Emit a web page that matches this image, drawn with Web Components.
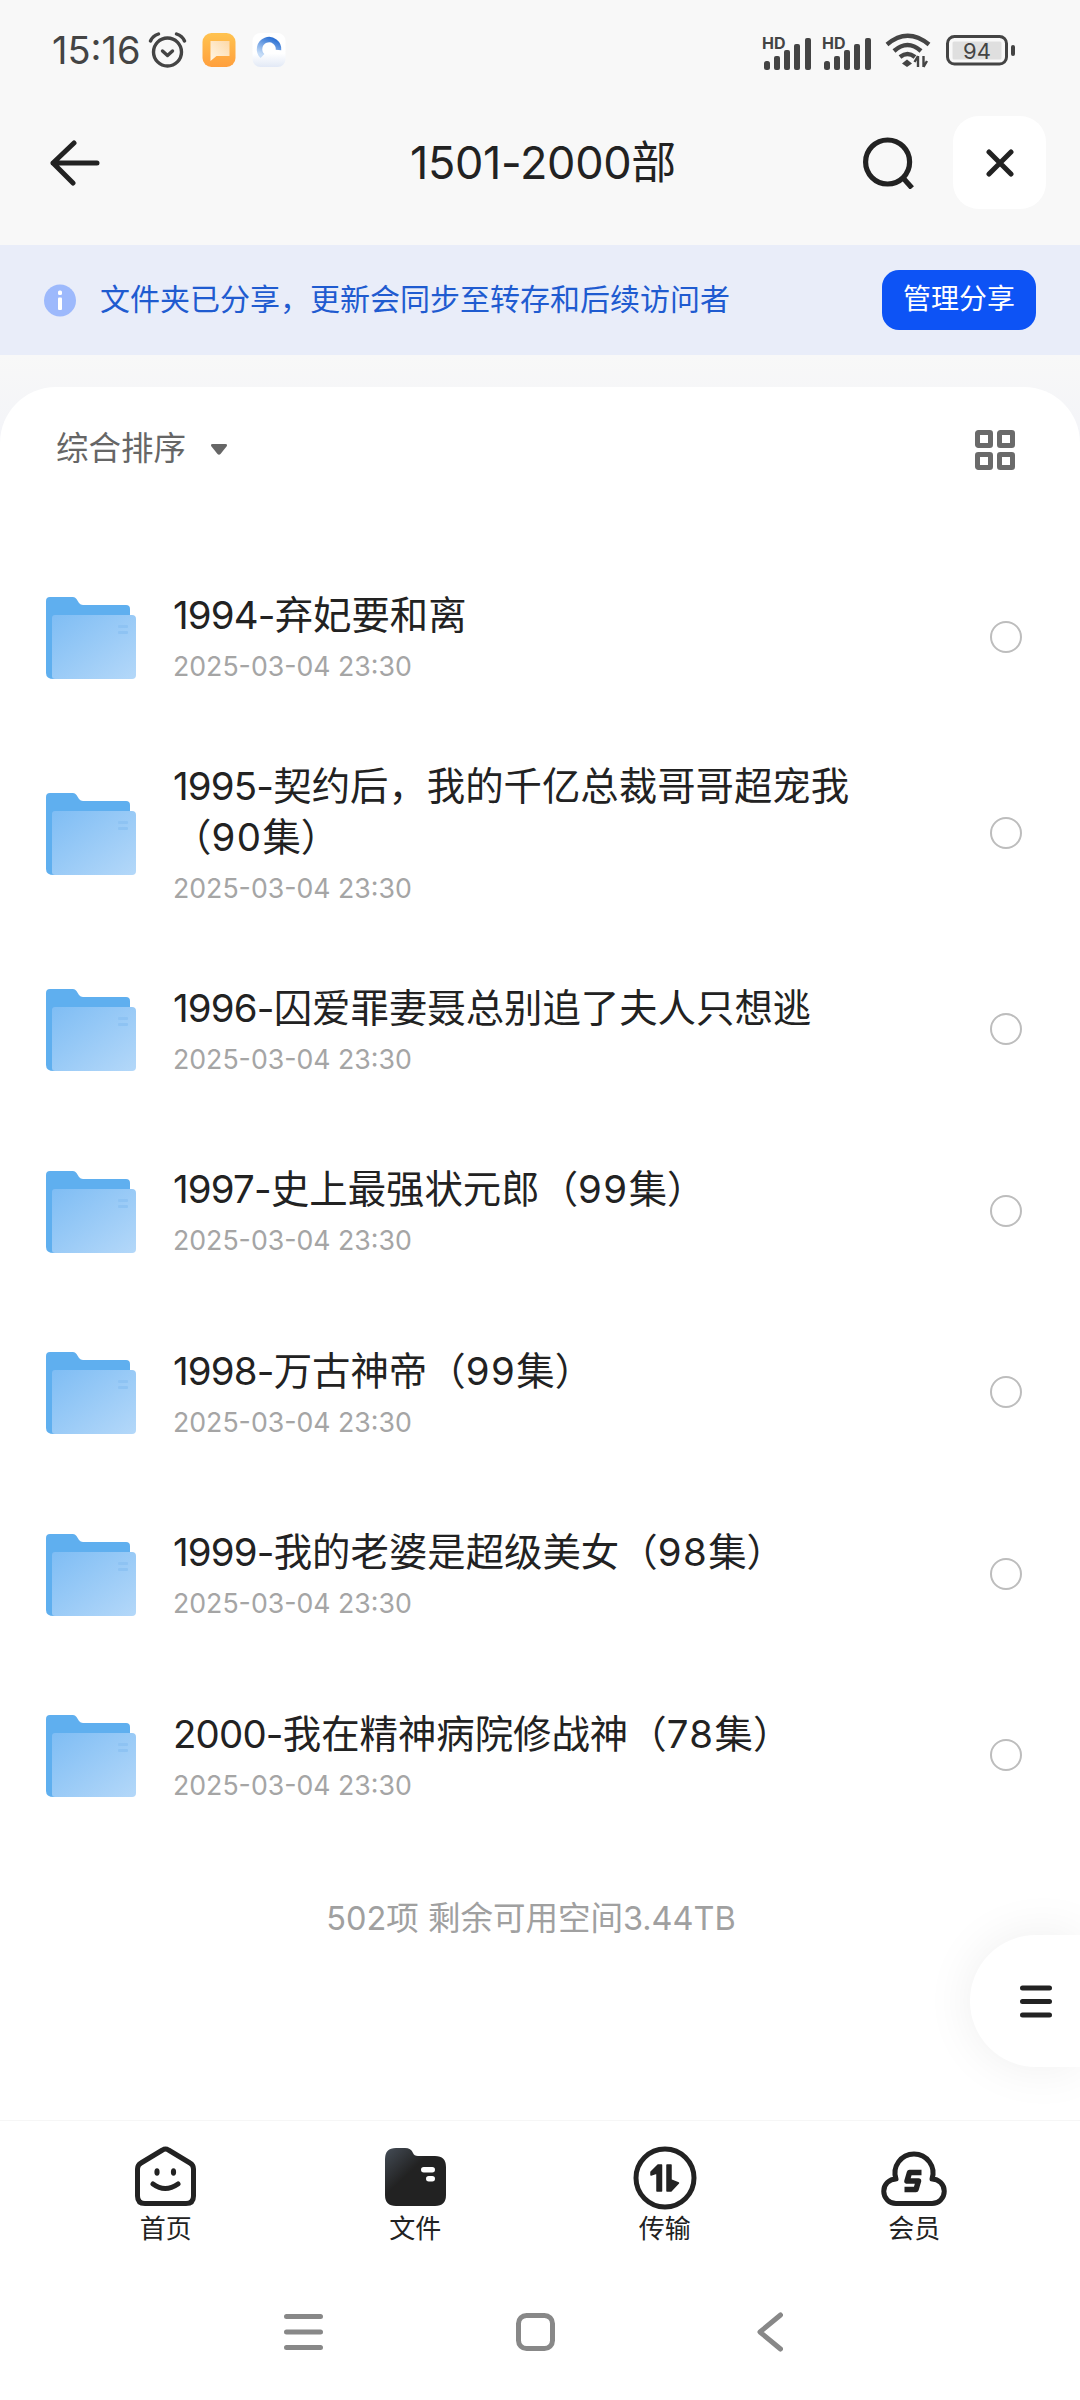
<!DOCTYPE html>
<html lang="zh-CN">
<head>
<meta charset="utf-8">
<title>1501-2000部</title>
<style>
  html, body { margin: 0; padding: 0; }
  body {
    width: 1080px;
    height: 2400px;
    overflow: hidden;
    display: flex;
    flex-direction: column;
    background: linear-gradient(#f8f8f8 355px, #f3f4f8 440px);
    font-family: Inter, "Noto Sans CJK SC", sans-serif;
    color: #222;
  }
</style>
</head>
<body>
  <status-bar></status-bar>
  <nav-bar>1501-2000部</nav-bar>
  <share-banner>文件夹已分享&#xFF0C;更新会同步至转存和后续访问者</share-banner>
  <file-sheet>
    <sort-bar slot="head">综合排序</sort-bar>
    <file-row date="2025-03-04 23:30"><span class="n">1994-</span>弃妃要和离</file-row>
    <file-row date="2025-03-04 23:30"><span class="n">1995-</span>契约后&#xFF0C;我的千亿总裁哥哥超宠我<span>&#xFF08;<span class="d">90</span>集&#xFF09;</span></file-row>
    <file-row date="2025-03-04 23:30"><span class="n">1996-</span>囚爱罪妻聂总别追了夫人只想逃</file-row>
    <file-row date="2025-03-04 23:30"><span class="n">1997-</span>史上最强状元郎<span>&#xFF08;<span class="d">99</span>集&#xFF09;</span></file-row>
    <file-row date="2025-03-04 23:30"><span class="n">1998-</span>万古神帝<span>&#xFF08;<span class="d">99</span>集&#xFF09;</span></file-row>
    <file-row date="2025-03-04 23:30"><span class="n">1999-</span>我的老婆是超级美女<span>&#xFF08;<span class="d">98</span>集&#xFF09;</span></file-row>
    <file-row date="2025-03-04 23:30"><span class="n">2000-</span>我在精神病院修战神<span>&#xFF08;<span class="d">78</span>集&#xFF09;</span></file-row>
    <span slot="foot">502项 剩余可用空间3.44TB</span>
    <float-button slot="float"></float-button>
  </file-sheet>
  <tab-bar>
    <tab-item icon="home">首页</tab-item>
    <tab-item icon="files">文件</tab-item>
    <tab-item icon="transfer">传输</tab-item>
    <tab-item icon="member">会员</tab-item>
  </tab-bar>
  <system-nav></system-nav>

<style>
  /* ajuste fino de los dígitos dentro de los títulos */
  file-row .d { letter-spacing: 1.5px; }
</style>

<script>
const FONT = 'Inter, "Noto Sans CJK SC", sans-serif'

// svg de la barra de pestañas, cada uno con su tamaño real
const TAB_ICONS = {
  home: `<svg width="61" height="60" viewBox="0 0 61 60" fill="none" stroke="#222" stroke-width="5" stroke-linejoin="round" stroke-linecap="round">
      <path d="M27.5 4 L6 17 Q2.5 19 2.5 23 V50 Q2.5 57.5 10 57.5 H51 Q58.5 57.5 58.5 50 V23 Q58.5 19 55 17 L33.5 4 Q30.5 2 27.5 4 Z"/>
      <ellipse cx="22" cy="26" rx="2.6" ry="3.8" fill="#222" stroke="none"/>
      <ellipse cx="38.5" cy="26" rx="2.6" ry="3.8" fill="#222" stroke="none"/>
      <path d="M18 38 Q30 47 43 38"/>
    </svg>`,
  files: `<svg width="61" height="60" viewBox="0 0 61 60">
      <defs><linearGradient id="fg" x1="0" y1="0" x2="0.75" y2="0.75">
        <stop offset="0" stop-color="#454d57"/><stop offset="0.55" stop-color="#222"/>
      </linearGradient></defs>
      <path d="M11 2 H20 Q26 2 28 7 Q29 10 33 10 H50 Q61 10 61 21 V49 Q61 60 50 60 H11 Q0 60 0 49 V13 Q0 2 11 2 Z" fill="url(#fg)"/>
      <rect x="36" y="21" width="14" height="5.5" rx="2.75" fill="#fff"/>
      <rect x="41" y="30" width="9" height="5.5" rx="2.75" fill="#fff"/>
    </svg>`,
  transfer: `<svg width="64" height="64" viewBox="0 0 64 64" style="margin-bottom:-4px">
      <circle cx="32" cy="32" r="29" fill="none" stroke="#222" stroke-width="5"/>
      <path d="M28.5 19 H25 L18 26 V29 L24 27 V45 H28.5 Z" fill="#222" stroke="#222" stroke-width="1.5" stroke-linejoin="round"/>
      <path d="M34 19 H38 V34 L45.5 37 L38 45 H34 Z" fill="#222" stroke="#222" stroke-width="1.5" stroke-linejoin="round"/>
    </svg>`,
  member: `<svg width="66" height="55" viewBox="0 0 66 55" fill="none" stroke="#222" stroke-linejoin="round">
      <path stroke-width="5" d="M15 52.5 H51 A12.25 12.25 0 0 0 51 28 A19 19 0 1 0 15 28 A12.25 12.25 0 0 0 15 52.5 Z"/>
      <path stroke-width="5.5" d="M40.5 21.5 H28.5 L26 30 H37.5 L35 38.5 H23.5"/>
    </svg>`,
}

const SIGNAL = `<svg width="50" height="40" viewBox="0 0 50 40">
      <text x="0" y="19" font-size="16" font-weight="700">HD</text>
      <rect x="2" y="31" width="6" height="9" rx="2.5" fill="#444"/>
      <rect x="12" y="26" width="6" height="14" rx="2" fill="#444"/>
      <rect x="22" y="20" width="6" height="20" rx="2" fill="#444"/>
      <rect x="32" y="14" width="6" height="26" rx="2" fill="#444"/>
      <rect x="43" y="8" width="6" height="32" rx="2" fill="#444"/>
    </svg>`

const statusTpl = document.createElement('template')
statusTpl.innerHTML = `
  <style>
    :host {
      display: flex;
      align-items: center;
      height: 100px;
      padding: 0 65px 0 52px;
      flex: none;
      color: #444;
    }
    .time {
      font: 400 38px/1 ${FONT};
      width: 96px;
      color: #444;
    }
    .left, .right { display: flex; align-items: center; }
    .right { margin-left: auto; }
    svg { display: block; }
    text { font-family: ${FONT}; fill: #444; }
  </style>
  <div class="left">
    <span class="time">15:16</span>
    <svg width="39" height="36" viewBox="0 0 38 36" fill="none" stroke="#444" stroke-width="3.4" stroke-linecap="round" stroke-linejoin="round">
      <circle cx="19" cy="20" r="14"/>
      <path d="M2 9 Q4 4 10 2"/><path d="M36 9 Q34 4 28 2"/>
      <path d="M14 19 L19 23.5 L24 19"/>
    </svg>
    <svg width="34" height="34" viewBox="0 0 33 34" style="margin-left:15px">
      <defs>
        <linearGradient id="o" x1="0.5" y1="0" x2="0.5" y2="1"><stop offset="0" stop-color="#ffc350"/><stop offset="1" stop-color="#ff9f3d"/></linearGradient>
        <linearGradient id="n" x1="0" y1="1" x2="1" y2="0"><stop offset="0" stop-color="#fff6e6"/><stop offset="1" stop-color="#fdd9a8"/></linearGradient>
      </defs>
      <rect width="33" height="34" rx="9" fill="url(#o)"/>
      <path d="M8 8 H27 V23 H14 L8 28 Z" fill="url(#n)"/>
    </svg>
    <svg width="34" height="34" viewBox="0 0 33 34" style="margin-left:16px">
      <defs>
        <linearGradient id="w" x1="0.5" y1="0" x2="0.5" y2="1"><stop offset="0.6" stop-color="#fff"/><stop offset="1" stop-color="#e2e9f6"/></linearGradient>
        <linearGradient id="b" x1="0.8" y1="0" x2="0.3" y2="1"><stop offset="0" stop-color="#2f73d4"/><stop offset="1" stop-color="#c5dcf7"/></linearGradient>
      </defs>
      <rect width="33" height="34" rx="8" fill="url(#w)"/>
      <path d="M10 23 A9.5 9.5 0 1 1 26 17" fill="none" stroke="url(#b)" stroke-width="5.5"/>
    </svg>
  </div>
  <div class="right">
    ${SIGNAL}
    <span style="width:10px"></span>
    ${SIGNAL}
    <svg width="46" height="36" viewBox="0 0 46 36" style="margin-left:13px" fill="none" stroke="#444" stroke-width="4.4">
      <path d="M2 12.5 Q22.5 -5 44 12.5"/>
      <path d="M9 19 Q22.5 7 36 19"/>
      <path d="M15 25 Q22.5 19 30 25" />
      <path d="M22 27.5 L27 31.5 L22 35 L17 31.5 Z" fill="#444" stroke="none"/>
      <path d="M33 24 V35 M29.5 30 L33 24 M38.5 24 V35 M42 29 L38.5 35" stroke-width="2.4" stroke="#444"/>
    </svg>
    <svg width="69" height="31" viewBox="0 0 69 31" style="margin-left:15px">
      <rect x="1.5" y="1.5" width="59" height="27.5" rx="7" fill="none" stroke="#444" stroke-width="3"/>
      <rect x="6.5" y="6.5" width="49" height="18" rx="1.5" fill="#dfdfdf"/>
      <text x="31" y="24" font-size="22" text-anchor="middle">94</text>
      <rect x="65" y="10" width="4" height="11" rx="2" fill="#444"/>
    </svg>
  </div>
`
class StatusBar extends HTMLElement {
  constructor() {
    super()
    this.attachShadow({ mode: 'open' }).appendChild(statusTpl.content.cloneNode(true))
  }
}
customElements.define('status-bar', StatusBar)

const navTpl = document.createElement('template')
navTpl.innerHTML = `
  <style>
    :host {
      display: grid;
      grid-template-columns: 1fr auto 1fr;
      align-items: center;
      height: 145px;
      padding: 0 34px 20px 50px;
      flex: none;
      box-sizing: border-box;
    }
    .title {
      font: 400 45px/1 ${FONT};
      letter-spacing: -0.3px;
      margin-right: 10px;
      color: #222;
      white-space: nowrap;
    }
    .actions {
      display: flex;
      align-items: center;
      justify-content: flex-end;
      gap: 39px;
    }
    .close {
      width: 93px;
      height: 93px;
      border-radius: 26px;
      background: #fff;
      display: flex;
      align-items: center;
      justify-content: center;
    }
    svg { display: block; }
  </style>
  <svg width="50" height="46" viewBox="0 0 50 46" fill="none" stroke="#222" stroke-width="5" stroke-linecap="round" stroke-linejoin="round">
    <path d="M24 3 L3 23 L23 43 M3 23 H47"/>
  </svg>
  <div class="title"><slot></slot></div>
  <div class="actions">
    <svg width="51" height="52" viewBox="0 0 51 52" fill="none" stroke="#222" stroke-width="5.2">
      <circle cx="24.6" cy="25" r="22"/>
      <path d="M41 42 L49 51"/>
    </svg>
    <div class="close">
      <svg width="28" height="28" viewBox="0 0 28 28" fill="none" stroke="#222" stroke-width="5" stroke-linecap="round">
        <path d="M3 3 L25 25 M25 3 L3 25"/>
      </svg>
    </div>
  </div>
`
class NavBar extends HTMLElement {
  constructor() {
    super()
    this.attachShadow({ mode: 'open' }).appendChild(navTpl.content.cloneNode(true))
  }
}
customElements.define('nav-bar', NavBar)

const bannerTpl = document.createElement('template')
bannerTpl.innerHTML = `
  <style>
    :host {
      display: flex;
      align-items: center;
      height: 110px;
      padding: 0 44px;
      background: #e9edf9;
      flex: none;
    }
    svg { display: block; flex: none; }
    .msg {
      margin-left: 24px;
      padding-bottom: 2px;
      flex: 1;
      font: 400 30px/1 ${FONT};
      color: #1f5bd0;
      white-space: nowrap;
    }
    .btn {
      width: 154px;
      height: 60px;
      border-radius: 17px;
      background: #0d53f5;
      color: #fff;
      font: 400 28px/58px ${FONT};
      text-align: center;
    }
  </style>
  <svg width="32" height="33" viewBox="0 0 32 33">
    <circle cx="16" cy="16.5" r="16" fill="#9db9fc"/>
    <rect x="14" y="6.5" width="4" height="4.5" rx="1.5" fill="#fff"/>
    <rect x="14" y="13.5" width="4" height="12.5" rx="1" fill="#fff"/>
  </svg>
  <span class="msg"><slot></slot></span>
  <span class="btn">管理分享</span>
`
class ShareBanner extends HTMLElement {
  constructor() {
    super()
    this.attachShadow({ mode: 'open' }).appendChild(bannerTpl.content.cloneNode(true))
  }
}
customElements.define('share-banner', ShareBanner)

const sheetTpl = document.createElement('template')
sheetTpl.innerHTML = `
  <style>
    :host {
      display: flex;
      flex-direction: column;
      flex: 1;
      position: relative;
      margin-top: 32px;
      background: #fff;
      border-radius: 56px 56px 0 0;
    }
    .list { margin-top: 35px; display: flex; flex-direction: column; }
    .foot {
      margin-top: 53px;
      padding-right: 18px;
      font: 400 32.5px/1.2 ${FONT};
      color: #a0a0a0;
      text-align: center;
    }
  </style>
  <slot name="head"></slot>
  <div class="list"><slot></slot></div>
  <div class="foot"><slot name="foot"></slot></div>
  <slot name="float"></slot>
`
class FileSheet extends HTMLElement {
  constructor() {
    super()
    this.attachShadow({ mode: 'open' }).appendChild(sheetTpl.content.cloneNode(true))
  }
}
customElements.define('file-sheet', FileSheet)

const sortTpl = document.createElement('template')
sortTpl.innerHTML = `
  <style>
    :host {
      display: flex;
      align-items: center;
      height: 124px;
      padding: 0 65px 0 56px;
      font: 400 32.5px/1 ${FONT};
      color: #666;
    }
    .caret { margin-left: 24px; display: block; }
    .grid { margin-left: auto; display: block; position: relative; top: 1px; }
  </style>
  <slot></slot>
  <svg class="caret" width="18" height="13" viewBox="0 0 18 13">
    <path d="M2.5 1 H15.5 Q18 1 16.5 3.5 L10.5 11 Q9 12.5 7.5 11 L1.5 3.5 Q0 1 2.5 1 Z" fill="#666"/>
  </svg>
  <svg class="grid" width="40" height="40" viewBox="0 0 40 40" fill="none" stroke="#6a6a6a" stroke-width="5">
    <rect x="2.5" y="2.5" width="13" height="13" rx="0.8"/>
    <rect x="24.5" y="2.5" width="13" height="13" rx="0.8"/>
    <rect x="2.5" y="24.5" width="13" height="13" rx="0.8"/>
    <rect x="24.5" y="24.5" width="13" height="13" rx="0.8"/>
  </svg>
`
class SortBar extends HTMLElement {
  constructor() {
    super()
    this.attachShadow({ mode: 'open' }).appendChild(sortTpl.content.cloneNode(true))
  }
}
customElements.define('sort-bar', SortBar)

const rowTpl = document.createElement('template')
rowTpl.innerHTML = `
  <style>
    :host {
      display: flex;
      align-items: center;
      min-height: 181.5px;
      box-sizing: border-box;
      padding: 25.5px 58px 25.5px 46px;
    }
    svg { display: block; flex: none; margin-top: 2px; }
    .text { flex: 1; margin: 0 80px 0 37px; min-width: 0; padding-top: 8px; }
    .title { font: 400 38.4px/51px ${FONT}; color: #222; }
    ::slotted(.n) { letter-spacing: -0.8px; }
    .date { font: 400 26.7px/50px ${FONT}; color: #a5a5a5; }
    .radio {
      width: 32px;
      height: 32px;
      box-sizing: border-box;
      border: 2.5px solid #bdbdbd;
      border-radius: 50%;
      flex: none;
    }
  </style>
  <svg width="90" height="82" viewBox="0 0 90 82">
    <defs>
      <linearGradient id="front" x1="0" y1="0" x2="1" y2="1">
        <stop offset="0" stop-color="#7fbdf4"/><stop offset="1" stop-color="#b4d8f9"/>
      </linearGradient>
    </defs>
    <path d="M4 0 H27 Q29 0 30.5 2 L33 6 Q34.5 8 37 8 H80 Q84 8 84 12 V30 H84 V82 H8 Q0 82 0 76 V4 Q0 0 4 0 Z" fill="#5fafef"/>
    <path d="M9 18 H86 Q90 18 90 22 V78 Q90 82 86 82 H9 Q6 82 6 79 V21 Q6 18 9 18 Z" fill="url(#front)"/>
    <rect x="72" y="28" width="10" height="3" rx="1" fill="#8ec3f3"/>
    <rect x="72" y="34" width="10" height="3" rx="1" fill="#8ec3f3"/>
  </svg>
  <div class="text">
    <div class="title"><slot></slot></div>
    <div class="date"></div>
  </div>
  <div class="radio"></div>
`
class FileRow extends HTMLElement {
  static get observedAttributes() {
    return ['date']
  }

  constructor() {
    super()
    this.attachShadow({ mode: 'open' }).appendChild(rowTpl.content.cloneNode(true))
  }

  attributeChangedCallback() {
    this.shadowRoot.querySelector('.date').textContent = this.getAttribute('date') ?? ''
  }
}
customElements.define('file-row', FileRow)

const floatTpl = document.createElement('template')
floatTpl.innerHTML = `
  <style>
    :host {
      position: absolute;
      right: 0;
      top: 1548px;
      width: 110px;
      height: 132px;
      display: flex;
      align-items: center;
      padding-left: 50px;
      box-sizing: border-box;
      background: #fff;
      border-radius: 66px 0 0 66px;
      box-shadow: 0 0 50px rgba(0,0,0,0.07);
    }
  </style>
  <svg width="32" height="33" viewBox="0 0 32 33" fill="none" stroke="#222" stroke-width="5" stroke-linecap="round">
    <path d="M2.5 3 H29.5 M2.5 16.5 H29.5 M2.5 30 H29.5"/>
  </svg>
`
class FloatButton extends HTMLElement {
  constructor() {
    super()
    this.attachShadow({ mode: 'open' }).appendChild(floatTpl.content.cloneNode(true))
  }
}
customElements.define('float-button', FloatButton)

const tabBarTpl = document.createElement('template')
tabBarTpl.innerHTML = `
  <style>
    :host {
      display: grid;
      grid-template-columns: repeat(4, 1fr);
      height: 159px;
      padding: 0 41px;
      background: #fff;
      border-top: 1px solid #f6f6f6;
      flex: none;
      position: relative;
    }
  </style>
  <slot></slot>
`
class TabBar extends HTMLElement {
  constructor() {
    super()
    this.attachShadow({ mode: 'open' }).appendChild(tabBarTpl.content.cloneNode(true))
  }
}
customElements.define('tab-bar', TabBar)

const tabTpl = document.createElement('template')
tabTpl.innerHTML = `
  <style>
    :host {
      display: flex;
      flex-direction: column;
      align-items: center;
      font: 400 26px/1 ${FONT};
      color: #222;
    }
    .icon {
      height: 64px;
      margin-top: 21px;
      display: flex;
      align-items: flex-end;
    }
    .icon svg { display: block; }
    .label { margin-top: 10px; }
  </style>
  <div class="icon"></div>
  <span class="label"><slot></slot></span>
`
class TabItem extends HTMLElement {
  constructor() {
    super()
    this.attachShadow({ mode: 'open' }).appendChild(tabTpl.content.cloneNode(true))
    this.shadowRoot.querySelector('.icon').innerHTML = TAB_ICONS[this.getAttribute('icon')] ?? ''
  }
}
customElements.define('tab-item', TabItem)

const sysTpl = document.createElement('template')
sysTpl.innerHTML = `
  <style>
    :host {
      display: block;
      height: 120px;
      flex: none;
      background: #fff;
    }
    .row {
      display: flex;
      align-items: center;
      height: 103px;
      padding-left: 284px;
    }
    svg { display: block; }
  </style>
  <div class="row">
    <svg width="39" height="38" viewBox="0 0 39 38" fill="none" stroke="#888" stroke-width="5" stroke-linecap="round">
      <path d="M2.5 3.5 H36.5 M2.5 19 H36.5 M2.5 34.5 H36.5"/>
    </svg>
    <svg width="39" height="38" viewBox="0 0 39 38" fill="none" stroke="#888" stroke-width="5" style="margin-left:193px">
      <rect x="2.5" y="2.5" width="34" height="33" rx="8"/>
    </svg>
    <svg width="26" height="40" viewBox="0 0 26 40" fill="none" stroke="#888" stroke-width="5" stroke-linecap="round" stroke-linejoin="round" style="margin-left:202px">
      <path d="M23.5 3 L3 20 L23.5 37"/>
    </svg>
  </div>
`
class SystemNav extends HTMLElement {
  constructor() {
    super()
    this.attachShadow({ mode: 'open' }).appendChild(sysTpl.content.cloneNode(true))
  }
}
customElements.define('system-nav', SystemNav)
</script>
</body>
</html>
